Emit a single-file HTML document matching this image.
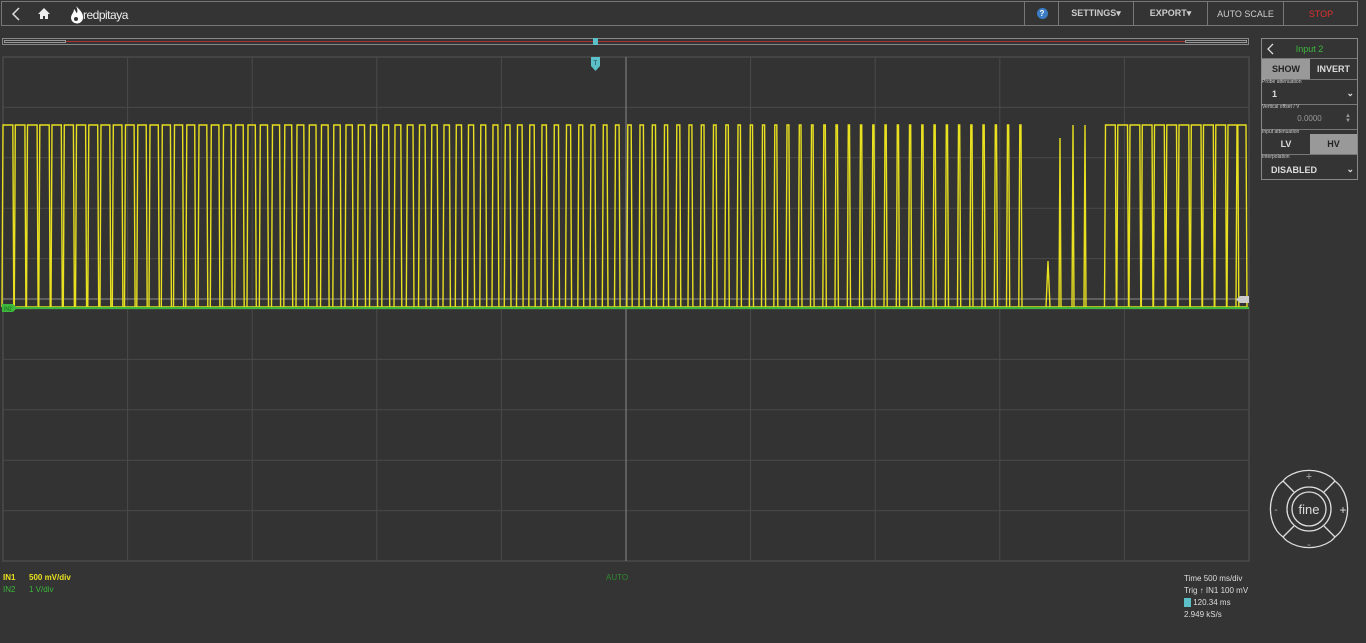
<!DOCTYPE html>
<html><head><meta charset="utf-8"><style>
*{box-sizing:border-box;margin:0;padding:0}
body{width:1366px;height:643px;background:#343434;font-family:"Liberation Sans",sans-serif;position:relative;overflow:hidden;color:#ddd}
.top{position:absolute;left:1px;top:1px;width:1357px;height:25px;border:1px solid #777;background:#343434}
.nb{position:absolute;top:0;height:23px;border-left:1px solid #777;font-size:9px;font-weight:bold;color:#ccc;display:flex;align-items:center;justify-content:center}
.abs{position:absolute}
.panel{position:absolute;left:1261px;top:38px;width:97px;height:142px;border:1px solid #888}
.row{position:absolute;left:0;width:95px;border-bottom:1px solid #777;font-size:9px;font-weight:bold;display:flex;align-items:center}
.lbl{position:absolute;font-size:5px;color:#ccc;left:0}
.bt{font-size:9px;font-weight:bold}
</style></head><body>
<div class="top">
 <svg class="abs" style="left:8px;top:5px" width="12" height="14"><path d="M9 1 L3 7 L9 13" stroke="#ddd" stroke-width="1.5" fill="none"/></svg>
 <svg class="abs" style="left:35px;top:5px" width="14" height="13"><path d="M7 1 L1 7 H3 V12 H6 V9 H8 V12 H11 V7 H13 Z" fill="#eee"/></svg>
 <svg class="abs" style="left:66px;top:3px" width="18" height="20"><path d="M8 1 C12 5 15 8 15 12 A6 6 0 0 1 3 13 C3 9 6 8 6 4 C8 6 8 8 9 8 C10 6 9 3 8 1Z" fill="#fff"/><circle cx="8" cy="14" r="2" fill="#343434"/></svg>
 <div class="abs" style="left:81px;top:6px;font-size:12px;color:#eee;letter-spacing:-0.5px">redpitaya</div>
 <div class="nb" style="left:1022px;width:35px"><span style="display:inline-block;width:11px;height:11px;border-radius:50%;background:#3b7cc4;color:#fff;font-size:8px;text-align:center;line-height:11px">?</span></div>
 <div class="nb" style="left:1056px;width:75px">SETTINGS▾</div>
 <div class="nb" style="left:1131px;width:74px">EXPORT▾</div>
 <div class="nb" style="left:1205px;width:76px;font-weight:normal">AUTO SCALE</div>
 <div class="nb" style="left:1281px;width:75px;color:#e03030;font-weight:normal">STOP</div>
</div>
<div class="abs" style="left:2px;top:38px;width:1247px;height:7px;border:1px solid #888"></div>
<div class="abs" style="left:4px;top:40px;width:62px;height:3px;border:1px solid #999"></div>
<div class="abs" style="left:66px;top:41px;width:1119px;height:1px;background:#a33"></div>
<div class="abs" style="left:1185px;top:40px;width:62px;height:3px;border:1px solid #999"></div>
<div class="abs" style="left:593px;top:38px;width:5px;height:7px;background:#5bc0c8"></div>
<svg class="abs" style="left:0;top:0" width="1260" height="565">
 <rect x="3" y="57" width="1246" height="504" fill="#333" stroke="#555"/>
 <g id="grid" stroke="#4a4a4a" stroke-width="1"></g>
 <line x1="626" y1="57" x2="626" y2="561" stroke="#888"/>
 <line x1="3" y1="299" x2="1249" y2="299" stroke="#aaa" stroke-width="0.8"/>
 <path id="wave" fill="none" stroke="#e8e020" stroke-width="1.4"/>
 <line x1="3" y1="308" x2="1249" y2="308" stroke="#3cb83c" stroke-width="2"/>
 <path d="M2 304 H13 L17 308 L13 312 H2Z" fill="#3cb83c"/>
 <text x="4" y="310.5" font-size="5" fill="#1a5a1a" font-family="Liberation Sans">IN2</text>
 <path d="M1249 296 H1240 L1236 299.5 L1240 303 H1249Z" fill="#ccc"/>
 <path d="M591 57 H600 V66 L595.5 71 L591 66Z" fill="#5bc0c8"/>
 <text x="593.5" y="65" font-size="6" fill="#234">T</text>
</svg>
<div class="panel">
 <div class="row" style="top:0;height:20px;justify-content:center;color:#3cb83c;font-weight:normal">Input 2</div>
 <svg class="abs" style="left:5px;top:4px" width="8" height="12"><path d="M6 1 L1 6 L6 11" stroke="#ddd" stroke-width="1.3" fill="none"/></svg>
 <div class="row" style="top:20px;height:21px"><div style="width:48px;height:20px;background:#999;color:#222;display:flex;align-items:center;justify-content:center">SHOW</div><div style="width:47px;text-align:center">INVERT</div></div>
 <div class="lbl" style="top:40px">Probe attenuation</div>
 <div class="row" style="top:44px;height:22px;padding-left:10px">1<span style="position:absolute;right:3px">⌄</span></div>
 <div class="lbl" style="top:65px">Vertical offset / V</div>
 <div class="row" style="top:69px;height:22px;justify-content:center;color:#999;font-weight:normal;font-size:8px">0.0000<span style="position:absolute;right:6px;font-size:6px;line-height:5px">▲<br>▼</span></div>
 <div class="lbl" style="top:90px">Input attenuation</div>
 <div class="row" style="top:95px;height:21px"><div style="width:48px;text-align:center">LV</div><div style="width:47px;height:20px;background:#999;color:#222;display:flex;align-items:center;justify-content:center">HV</div></div>
 <div class="lbl" style="top:115px">Interpolation</div>
 <div class="row" style="top:120px;height:21px;padding-left:9px;border:none">DISABLED<span style="position:absolute;right:3px">⌄</span></div>
</div>
<svg class="abs" style="left:1265px;top:465px" width="88" height="90">
 <g fill="none" stroke="#ddd" stroke-width="1.3">
  <circle cx="44" cy="44" r="17"/>
  <circle cx="44" cy="44" r="22"/>
  <path d="M18 16 L29 27 M70 16 L59 27 M18 72 L29 61 M70 72 L59 61"/>
  <path d="M22 12 A40 40 0 0 1 66 12 M22 76 A40 40 0 0 0 66 76 M12 22 A40 40 0 0 0 12 66 M76 22 A40 40 0 0 1 76 66"/>
  <path d="M18 16 A36 36 0 0 1 22 12 M70 16 A36 36 0 0 0 66 12 M18 72 A36 36 0 0 0 22 76 M70 72 A36 36 0 0 1 66 76 M18 16 A36 36 0 0 0 12 22 M70 16 A36 36 0 0 1 76 22 M18 72 A36 36 0 0 1 12 66 M70 72 A36 36 0 0 0 76 66"/>
 </g>
 <text x="44" y="49" text-anchor="middle" font-size="13" fill="#ddd" font-family="Liberation Sans">fine</text>
 <text x="44" y="15" text-anchor="middle" font-size="11" fill="#aaa">+</text>
 <text x="44" y="83" text-anchor="middle" font-size="11" fill="#aaa">-</text>
 <text x="78" y="49" text-anchor="middle" font-size="12" fill="#ddd">+</text>
 <text x="11" y="48" text-anchor="middle" font-size="10" fill="#aaa">-</text>
</svg>
<div class="abs bt" style="left:3px;top:573px;font-size:8px;color:#e8e020">IN1</div>
<div class="abs bt" style="left:29px;top:573px;font-size:8px;color:#e8e020">500 mV/div</div>
<div class="abs bt" style="left:3px;top:585px;font-size:8px;color:#3cb83c;font-weight:normal">IN2</div>
<div class="abs bt" style="left:29px;top:585px;font-size:8px;color:#3cb83c;font-weight:normal">1 V/div</div>
<div class="abs" style="left:606px;top:573px;font-size:8px;color:#2e8a2e">AUTO</div>
<div class="abs" style="left:1184px;top:573px;font-size:8px;line-height:12px;color:#ddd">Time 500 ms/div<br>Trig ↑ IN1 100 mV<br><span style="display:inline-block;width:7px;height:9px;background:#5bc0c8;vertical-align:middle"></span> 120.34 ms<br>2.949 kS/s</div>
<script>
var g=document.getElementById('grid'),s='';
for(var i=1;i<10;i++){var x=3+i*124.6;s+='<line x1="'+x+'" y1="57" x2="'+x+'" y2="561"/>';var y=57+i*50.4;s+='<line x1="3" y1="'+y+'" x2="1249" y2="'+y+'"/>';}
g.innerHTML=s;
var H=125,L=307,p=12.25,d='M3 '+L+' L1247 '+L+' M3 '+H;
for(var x=3;x<1237;x+=p){
 var w;
 if(x<1030){var t=Math.min(1,(x-3)/850);w=p*(0.8-0.7*t);}
 else if(x<1095)continue;
 else w=p*0.8;
 var a=x+w;
 d+=' M'+(x-1).toFixed(1)+' '+L+' L'+x.toFixed(1)+' '+H+' L'+a.toFixed(1)+' '+H+' L'+(a+1).toFixed(1)+' '+L;
}
d+=' M1236 '+L+' L1237 '+H+' L1246 '+H+' L1247 '+L;
d+=' M1046 307 L1048 261 L1050 307 M1059 307 L1060 138 L1061 307 M1072 307 L1073 125 L1074 307 M1084 307 L1085 125 L1086 307';
document.getElementById('wave').setAttribute('d',d);
</script>
</body></html>
